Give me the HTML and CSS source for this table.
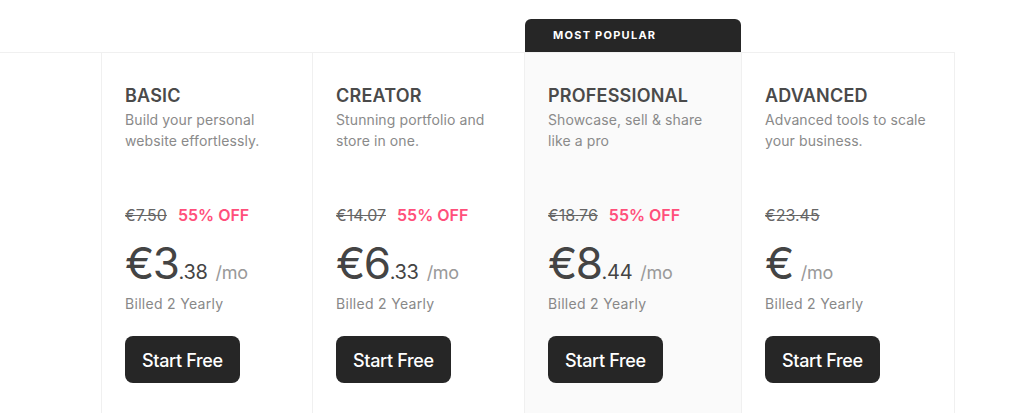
FILE: index.html
```html
<!DOCTYPE html>
<html lang="en">
<head>
<meta charset="utf-8">
<title>Pricing</title>
<link rel="stylesheet" href="styles.css">
</head>
<body>
<div class="pricing">
  <div class="spacer"></div>
  <div class="card c1">
    <h3 class="title">BASIC</h3>
    <p class="desc">Build your personal website effortlessly.</p>
    <div class="old"><s>€7.50</s><span class="off">55% OFF</span></div>
    <div class="price"><span class="cur">€3</span><span class="cents">.38</span><span class="per">/mo</span></div>
    <div class="billed">Billed 2 Yearly</div>
    <button class="btn">Start Free</button>
  </div>
  <div class="card c2">
    <h3 class="title">CREATOR</h3>
    <p class="desc">Stunning portfolio and store in one.</p>
    <div class="old"><s>€14.07</s><span class="off">55% OFF</span></div>
    <div class="price"><span class="cur">€6</span><span class="cents">.33</span><span class="per">/mo</span></div>
    <div class="billed">Billed 2 Yearly</div>
    <button class="btn">Start Free</button>
  </div>
  <div class="card c3 popular">
    <div class="badge">MOST POPULAR</div>
    <h3 class="title">PROFESSIONAL</h3>
    <p class="desc">Showcase, sell &amp; share like a pro</p>
    <div class="old"><s>€18.76</s><span class="off">55% OFF</span></div>
    <div class="price"><span class="cur">€8</span><span class="cents">.44</span><span class="per">/mo</span></div>
    <div class="billed">Billed 2 Yearly</div>
    <button class="btn">Start Free</button>
  </div>
  <div class="card c4">
    <h3 class="title">ADVANCED</h3>
    <p class="desc">Advanced tools to scale your business.</p>
    <div class="old"><s>€23.45</s></div>
    <div class="price"><span class="cur">€</span><span class="cents"></span><span class="per">/mo</span></div>
    <div class="billed">Billed 2 Yearly</div>
    <button class="btn">Start Free</button>
  </div>
</div>
</body>
</html>
```

FILE: styles.css
```css
* { box-sizing: border-box; }
html, body { margin: 0; padding: 0; background: #fff; }
body { font-family: Inter, "Noto Sans", sans-serif; color: #444; overflow: hidden; }

.pricing {
  display: flex;
  width: 955px;
  margin-top: 52px;
  border-top: 1px solid #f0f0f0;
  border-right: 1px solid #f0f0f0;
}
.spacer { width: 101px; flex: none; }
.card {
  position: relative;
  flex: none;
  border-left: 1px solid #f0f0f0;
  padding: 32px 20px 40px 23px;
  height: 380px;
}
.c1 { width: 211px; }
.c2 { width: 212px; }
.c3 { width: 217px; }
.c4 { width: 213px; }
.popular { background: #fafafa; }

.badge {
  position: absolute;
  left: 0;
  right: 0;
  bottom: 100%;
  height: 33px;
  margin-bottom: 1px;
  background: #262626;
  color: #fff;
  border-radius: 6px 6px 0 0;
  font-size: 11px;
  font-weight: 700;
  letter-spacing: 1.25px;
  line-height: 33px;
  padding-left: 28px;
}

.title {
  margin: 0;
  font-size: 18px;
  line-height: 22px;
  font-weight: 600;
  color: #4a4a4a;
  letter-spacing: 0.2px;
}
.desc {
  margin: 2px 0 0;
  font-size: 14px;
  line-height: 21px;
  color: #8a8a8a;
  letter-spacing: 0.1px;
  height: 42px;
}
.old {
  margin-top: 52px;
  display: flex;
  gap: 11px;
  font-size: 16px;
  line-height: 24px;
}
.old s { color: #666; }
.off { color: #ff4f7b; font-weight: 600; }

.price {
  margin-top: 14px;
  display: flex;
  align-items: baseline;
  height: 44px;
  line-height: 44px;
  color: #444;
}
.cur { font-size: 44px; letter-spacing: -1.5px; }
.cents { font-size: 20px; letter-spacing: -0.3px; }
.per { font-size: 18px; color: #999; margin-left: 8px; letter-spacing: -0.3px; }

.billed {
  margin-top: 9px;
  font-size: 14px;
  line-height: 20px;
  color: #888;
  letter-spacing: 0.3px;
}
.btn {
  margin-top: 22px;
  height: 47px;
  padding: 0 17px 0 17px;
  border: 0;
  border-radius: 8px;
  background: #262626;
  color: #fff;
  font-family: inherit;
  font-size: 18px;
  font-weight: 500;
  line-height: 49px;
  letter-spacing: -0.35px;
  cursor: pointer;
}
```
